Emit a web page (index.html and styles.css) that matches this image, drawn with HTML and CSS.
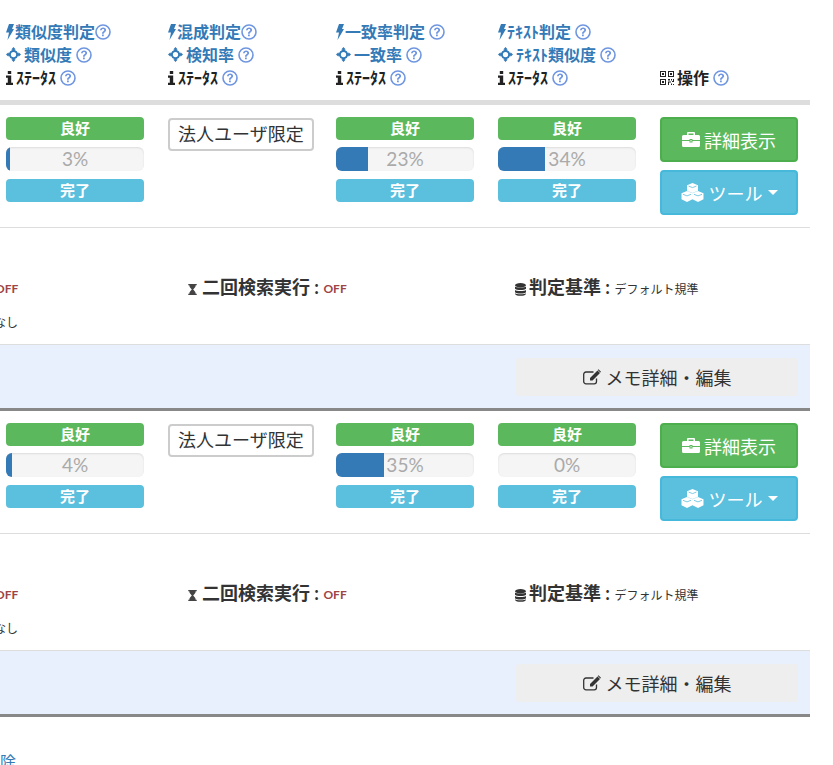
FILE: index.html
```html
<!DOCTYPE html>
<html lang="ja">
<head>
<meta charset="utf-8">
<title>判定結果</title>
<link rel="stylesheet" href="styles.css">
</head>
<body>
<svg class="defs" width="0" height="0" aria-hidden="true">
  <symbol id="bolt" viewBox="0 0 8 16"><path d="M3 0H8L6 5H8L1.500 16 3 8.500H0Z"/></symbol>
  <symbol id="cross" viewBox="0 0 16 16"><path fill-rule="evenodd" d="M8 0l2.400 2.600H9.300v.6A5 5 0 0 1 12.800 6.700h.6V5.600L16 8l-2.600 2.400V9.300h-.6A5 5 0 0 1 9.300 12.800v.6h1.100L8 16l-2.400-2.600h1.100v-.6A5 5 0 0 1 3.200 9.300h-.6v1.100L0 8l2.600-2.400v1.100h.6A5 5 0 0 1 6.700 3.200v-.6H5.600ZM8 5.200a2.800 2.800 0 1 0 0 5.600 2.800 2.800 0 0 0 0-5.600Z"/></symbol>
  <symbol id="info" viewBox="0 0 7 14"><path d="M1.800 0h3.400v3H1.800ZM0 4.500h5.200V11.700H7V14H0v-2.300h1.800V6.800H0Z"/></symbol>
  <symbol id="help" viewBox="0 0 16 16"><circle cx="8" cy="8" r="7" fill="none" stroke="currentColor" stroke-width="1.600"/><path d="M5 6.300C5.200 4.500 6.500 3.500 8.100 3.500c1.800 0 3 1.100 3 2.600 0 1.100-.6 1.700-1.500 2.300-.7.400-.8.700-.8 1.300H7c0-1.100.3-1.700 1.100-2.200.7-.5 1.200-.8 1.200-1.400 0-.7-.5-1.100-1.200-1.100-.8 0-1.300.5-1.400 1.300ZM7 10.400h1.800v1.900H7Z"/></symbol>
  <symbol id="qr" viewBox="0 0 14 14"><path fill-rule="evenodd" d="M0 0h6v6H0Zm1 1v4h4V1Zm1 1h2v2H2ZM8 0h6v6H8Zm1 1v4h4V1Zm1 1h2v2h-2ZM0 8h6v6H0Zm1 1v4h4V9Zm1 1h2v2H2ZM8 8h2v1.500H8Zm3 0h1v1.500h-1Zm2 0h1v3h-2v-1h1ZM8 10.500h3v1H9V14H8Zm3 2h1V14h-1Zm2 .5h1v1h-1Z"/></symbol>
  <symbol id="case" viewBox="0 0 18 15"><path fill-rule="evenodd" d="M6 0h6a1 1 0 0 1 1 1v2h3.500A1.500 1.500 0 0 1 18 4.500V8h-7.500V7h-3v1H0V4.500A1.500 1.500 0 0 1 1.500 3H5V1a1 1 0 0 1 1-1Zm.500 1.500V3h5V1.500ZM0 9h7.500v1.500h3V9H18v4.500a1.500 1.500 0 0 1-1.500 1.500h-15A1.500 1.500 0 0 1 0 13.500ZM8.500 8h1v1.500h-1Z"/></symbol>
  <symbol id="cubes" viewBox="0 0 22 19"><path d="M11 0l5.500 2.200v5.600l-5.500 2.200-5.500-2.200V2.200Zm-5.500 8l5.500 2.200v6l-5.500 2.800L0 16.200v-6Zm11 0l5.500 2.200v6L16.500 19 11 16.200v-6Z"/><path d="M7 3l4 1.600L15 3M1.500 11.300l4 1.600 4-1.600M12.500 11.300l4 1.600 4-1.600" fill="none" stroke="#5bbfde" stroke-width=".8"/></symbol>
  <symbol id="hour" viewBox="0 0 10 13"><path d="M0 0h10v1.500H8.800C8.800 4 6.600 5.200 5.800 6.500c.8 1.300 3 2.500 3 5H10V13H0v-1.500h1.200c0-2.500 2.200-3.700 3-5-.8-1.300-3-2.500-3-5H0Z"/></symbol>
  <symbol id="db" viewBox="0 0 11 13"><ellipse cx="5.500" cy="2.200" rx="5.500" ry="2.200"/><path d="M0 3.600c1 1.300 10 1.300 11 0v2.200c-1 1.700-10 1.700-11 0ZM0 7c1 1.400 10 1.400 11 0v2.200c-1 1.700-10 1.700-11 0ZM0 10.300c1 1.400 10 1.400 11 0v.6C10 13.500 1 13.500 0 10.900Z"/></symbol>
  <symbol id="edit" viewBox="0 0 18 16"><path fill="none" stroke="currentColor" stroke-width="1.300" d="M13.500 9.500v3a2.300 2.300 0 0 1-2.300 2.300H3A2.300 2.300 0 0 1 .7 12.500V5.300A2.300 2.300 0 0 1 3 3h7.500"/><path d="M14.500 1.500l2.500 2.500-7.500 7.500H7V9Zm1-1.300l2.500 2.500-.7.700-2.500-2.500Z"/></symbol>
</svg>

<main class="page">
  <div class="grid head">
    <div class="cell">
      <div class="hline link"><svg class="i-bolt"><use href="#bolt"/></svg>類似度判定<svg class="i-help tight"><use href="#help"/></svg></div>
      <div class="hline link"><svg class="i-cross"><use href="#cross"/></svg>類似度<svg class="i-help"><use href="#help"/></svg></div>
      <div class="hline"><svg class="i-info"><use href="#info"/></svg>ｽﾃｰﾀｽ<svg class="i-help"><use href="#help"/></svg></div>
    </div>
    <div class="cell">
      <div class="hline link"><svg class="i-bolt"><use href="#bolt"/></svg>混成判定<svg class="i-help tight"><use href="#help"/></svg></div>
      <div class="hline link"><svg class="i-cross"><use href="#cross"/></svg>検知率<svg class="i-help"><use href="#help"/></svg></div>
      <div class="hline"><svg class="i-info"><use href="#info"/></svg>ｽﾃｰﾀｽ<svg class="i-help"><use href="#help"/></svg></div>
    </div>
    <div class="cell">
      <div class="hline link"><svg class="i-bolt"><use href="#bolt"/></svg>一致率判定<svg class="i-help"><use href="#help"/></svg></div>
      <div class="hline link"><svg class="i-cross"><use href="#cross"/></svg>一致率<svg class="i-help"><use href="#help"/></svg></div>
      <div class="hline"><svg class="i-info"><use href="#info"/></svg>ｽﾃｰﾀｽ<svg class="i-help"><use href="#help"/></svg></div>
    </div>
    <div class="cell">
      <div class="hline link"><svg class="i-bolt"><use href="#bolt"/></svg>ﾃｷｽﾄ判定<svg class="i-help"><use href="#help"/></svg></div>
      <div class="hline link"><svg class="i-cross"><use href="#cross"/></svg>ﾃｷｽﾄ類似度<svg class="i-help"><use href="#help"/></svg></div>
      <div class="hline"><svg class="i-info"><use href="#info"/></svg>ｽﾃｰﾀｽ<svg class="i-help"><use href="#help"/></svg></div>
    </div>
    <div class="cell cell-end">
      <div class="hline"><svg class="i-qr"><use href="#qr"/></svg>操作<svg class="i-help"><use href="#help"/></svg></div>
    </div>
  </div>

  <section class="record">
    <div class="grid result">
      <div class="cell">
        <div class="tag good">良好</div>
        <div class="bar"><div class="fill" style="width:3%"></div><span>3%</span></div>
        <div class="tag done">完了</div>
      </div>
      <div class="cell"><span class="limit">法人ユーザ限定</span></div>
      <div class="cell">
        <div class="tag good">良好</div>
        <div class="bar"><div class="fill" style="width:23%"></div><span>23%</span></div>
        <div class="tag done">完了</div>
      </div>
      <div class="cell">
        <div class="tag good">良好</div>
        <div class="bar"><div class="fill" style="width:34%"></div><span>34%</span></div>
        <div class="tag done">完了</div>
      </div>
      <div class="cell actions">
        <button class="btn btn-green"><svg class="i-case"><use href="#case"/></svg>詳細表示</button>
        <button class="btn btn-blue"><svg class="i-cubes"><use href="#cubes"/></svg>ツール<i class="caret"></i></button>
      </div>
    </div>
    <div class="detail">
      <div class="opts">
        <div class="off first">OFF</div>
        <div class="opt"><svg class="i-hour"><use href="#hour"/></svg><b>二回検索実行 : </b><span class="off">OFF</span></div>
        <div class="opt"><svg class="i-db"><use href="#db"/></svg><b>判定基準 : </b><small>デフォルト規準</small></div>
      </div>
      <div class="none">なし</div>
    </div>
    <div class="memo"><button class="memo-btn"><svg class="i-edit"><use href="#edit"/></svg>メモ詳細・編集</button></div>
  </section>

  <section class="record">
    <div class="grid result">
      <div class="cell">
        <div class="tag good">良好</div>
        <div class="bar"><div class="fill" style="width:4%"></div><span>4%</span></div>
        <div class="tag done">完了</div>
      </div>
      <div class="cell"><span class="limit">法人ユーザ限定</span></div>
      <div class="cell">
        <div class="tag good">良好</div>
        <div class="bar"><div class="fill" style="width:35%"></div><span>35%</span></div>
        <div class="tag done">完了</div>
      </div>
      <div class="cell">
        <div class="tag good">良好</div>
        <div class="bar"><div class="fill" style="width:0%"></div><span>0%</span></div>
        <div class="tag done">完了</div>
      </div>
      <div class="cell actions">
        <button class="btn btn-green"><svg class="i-case"><use href="#case"/></svg>詳細表示</button>
        <button class="btn btn-blue"><svg class="i-cubes"><use href="#cubes"/></svg>ツール<i class="caret"></i></button>
      </div>
    </div>
    <div class="detail">
      <div class="opts">
        <div class="off first">OFF</div>
        <div class="opt"><svg class="i-hour"><use href="#hour"/></svg><b>二回検索実行 : </b><span class="off">OFF</span></div>
        <div class="opt"><svg class="i-db"><use href="#db"/></svg><b>判定基準 : </b><small>デフォルト規準</small></div>
      </div>
      <div class="none">なし</div>
    </div>
    <div class="memo"><button class="memo-btn"><svg class="i-edit"><use href="#edit"/></svg>メモ詳細・編集</button></div>
  </section>

  <a class="foot-link">除</a>
</main>
</body>
</html>
```

FILE: styles.css
```css
* { box-sizing: border-box; }
html, body { height: 100%; }
body {
  margin: 0;
  overflow: hidden;
  background: #fff;
  color: #333;
  font-family: Lato, "Noto Sans CJK JP", sans-serif;
  font-size: 16px;
}
.defs { display: block; height: 0; }
svg { fill: currentColor; flex: none; }
.page { width: 810px; }

.grid { display: grid; grid-template-columns: 162px 168px 162px 162px 156px; }
.cell { padding: 0 18px 0 6px; min-width: 0; }
.cell:last-child { padding-right: 12px; }

.head { height: 105px; padding-top: 20px; border-bottom: 5px solid #ddd; }
.hline {
  display: flex;
  align-items: center;
  height: 23px;
  font-weight: 700;
  line-height: 23px;
  color: #222;
  white-space: nowrap;
}
.link { color: #337ab7; }
.cell-end { display: flex; align-items: flex-end; padding-bottom: 11px; }

.i-bolt { width: 8px; height: 16px; margin-right: 1px; }
.i-cross { width: 15px; height: 15px; margin-right: 3px; }
.i-info { width: 7px; height: 14px; margin-right: 3px; }
.i-help { width: 16px; height: 16px; margin-left: 4px; color: #6f96e0; }
.i-help.tight { margin-left: 0; }
.i-qr { width: 14px; height: 14px; margin-right: 3px; }

.result { height: 123px; padding-top: 12px; border-bottom: 1px solid #ddd; }
.tag {
  height: 23px;
  border-radius: 4px;
  color: #fff;
  font-size: 15px;
  font-weight: 700;
  line-height: 22px;
  text-align: center;
}
.good { background: #5cb85c; }
.done { background: #5bbfde; }
.bar {
  display: grid;
  height: 24px;
  margin: 7px 0 8px;
  border-radius: 6px;
  background: #f5f5f5;
  box-shadow: inset 0 1px 2px rgba(0, 0, 0, .1);
  overflow: hidden;
  font-size: 19px;
  line-height: 24px;
  color: #aaa;
}
.fill { grid-area: 1 / 1; background: #337ab7; height: 100%; }
.bar span { grid-area: 1 / 1; text-align: center; }
.limit {
  display: inline-block;
  height: 33px;
  margin-top: 1px;
  padding: 0 8px;
  border: 2px solid #ccc;
  border-radius: 4px;
  font-size: 18px;
  line-height: 29px;
  white-space: nowrap;
}
.actions { display: flex; flex-direction: column; gap: 8px; }
.btn {
  display: flex;
  align-items: center;
  justify-content: center;
  height: 45px;
  padding: 0;
  border: 2px solid;
  border-radius: 4px;
  color: #fff;
  font-family: inherit;
  font-size: 18px;
}
.btn-green { background: #5cb85c; border-color: #4cae4c; }
.btn-blue { background: #5bbfde; border-color: #46b8da; }
.i-case { width: 18px; height: 15px; margin-right: 4px; }
.i-cubes { width: 23px; height: 19px; margin-right: 5px; }
.caret {
  width: 0;
  height: 0;
  margin-left: 5px;
  border: 5.500px solid transparent;
  border-top-color: #fff;
  border-bottom-width: 0;
}

.detail { height: 116px; padding-top: 44px; }
.opts { display: grid; grid-template-columns: 187px 328px 1fr; align-items: center; height: 30px; }
.opt { display: flex; align-items: center; white-space: pre; }
.opt b { font-size: 18px; font-weight: 700; color: #333; line-height: 30px; }
.opt small { font-size: 12px; color: #333; margin-top: 2px; }
.off { font-size: 12px; font-weight: 700; color: #9e4444; margin-top: 2px; }
.first { margin-left: -5px; }
.i-hour { width: 9px; height: 11px; margin: 5px 5px 0 1px; color: #444; }
.i-db { width: 11px; height: 13px; margin-right: 3px; margin-top: 4px; }
.none { margin: 11px 0 0 -6px; font-size: 12px; line-height: 20px; color: #333; }

.memo {
  display: flex;
  justify-content: flex-end;
  height: 67px;
  padding: 13px 12px 0 0;
  border-top: 1px solid #ddd;
  border-bottom: 3px solid #888;
  background: #e8effd;
}
.memo-btn {
  display: flex;
  align-items: center;
  justify-content: center;
  width: 282px;
  height: 38px;
  padding-bottom: 2px;
  border: 0;
  border-radius: 3px;
  background: #eee;
  color: #333;
  font-family: inherit;
  font-size: 18px;
}
.i-edit { width: 18px; height: 16px; margin-right: 5px; }
.foot-link { display: block; margin-top: 33px; font-size: 16px; line-height: 24px; color: #337ab7; }
```
